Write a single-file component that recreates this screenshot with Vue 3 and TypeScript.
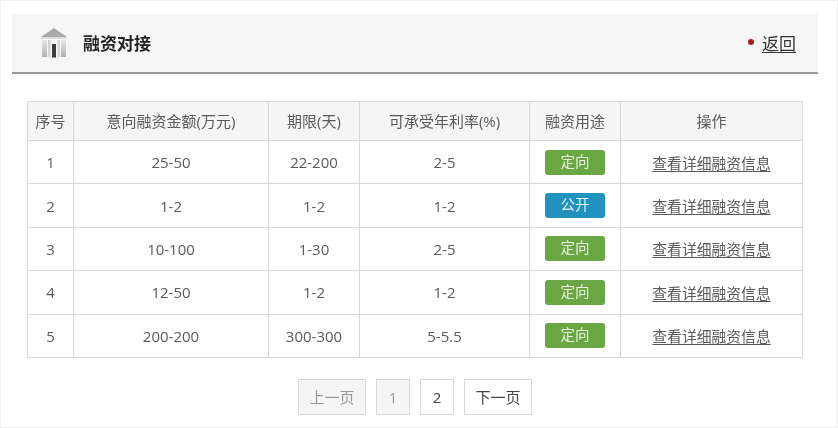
<script setup lang="ts">
interface Row {
  id: number
  amount: string
  days: string
  rate: string
  open: boolean
}
const rows: Row[] = [
  { id: 1, amount: '25-50', days: '22-200', rate: '2-5', open: false },
  { id: 2, amount: '1-2', days: '1-2', rate: '1-2', open: true },
  { id: 3, amount: '10-100', days: '1-30', rate: '2-5', open: false },
  { id: 4, amount: '12-50', days: '1-2', rate: '1-2', open: false },
  { id: 5, amount: '200-200', days: '300-300', rate: '5-5.5', open: false },
]
</script>

<template>
  <div class="page">
    <header class="head">
      <div class="title">
        <svg class="bank" width="28" height="30" viewBox="0 0 28 30">
          <defs>
            <linearGradient id="col" x1="0" y1="0" x2="0" y2="1">
              <stop offset="0" stop-color="#e8e8e8" />
              <stop offset="1" stop-color="#b0b0b0" />
            </linearGradient>
          </defs>
          <path d="M14 0 L27 9 L1 9 Z" fill="#a9a9a9" />
          <rect x="1" y="9" width="26" height="2" fill="#dcdcdc" />
          <rect x="2" y="12" width="5" height="17" fill="url(#col)" />
          <rect x="21" y="12" width="5" height="17" fill="url(#col)" />
          <rect x="8" y="12" width="2.5" height="17" fill="#d4d4d4" />
          <rect x="17.500" y="12" width="2.500" height="17" fill="#d4d4d4" />
          <rect x="12" y="16" width="4" height="13.500" fill="#3c3c3c" />
        </svg>
        <h1>融资对接</h1>
      </div>
      <div class="back"><i class="dot"></i><a>返回</a></div>
    </header>

    <table class="grid">
      <colgroup>
        <col class="c1" /><col class="c2" /><col class="c3" /><col class="c4" /><col class="c5" /><col class="c6" />
      </colgroup>
      <thead>
        <tr>
          <th>序号</th>
          <th>意向融资金额(万元)</th>
          <th>期限(天)</th>
          <th>可承受年利率(%)</th>
          <th>融资用途</th>
          <th>操作</th>
        </tr>
      </thead>
      <tbody>
        <tr v-for="r in rows" :key="r.id">
          <td>{{ r.id }}</td>
          <td>{{ r.amount }}</td>
          <td>{{ r.days }}</td>
          <td>{{ r.rate }}</td>
          <td><span class="tag" :class="{ open: r.open }">{{ r.open ? '公开' : '定向' }}</span></td>
          <td><a class="link">查看详细融资信息</a></td>
        </tr>
      </tbody>
    </table>

    <nav class="pager">
      <span class="pg off wide">上一页</span>
      <span class="pg off">1</span>
      <span class="pg">2</span>
      <span class="pg wide">下一页</span>
    </nav>
  </div>
</template>

<style scoped>
.page {
  box-sizing: border-box;
  width: 838px;
  height: 428px;
  padding: 14px 19px 0 11px;
  border: 1px solid #f0f0f0;
  background: #fff;
  font-family: "Open Sans", "Noto Sans CJK SC", sans-serif;
  font-size: 15px;
  color: #5a5a5a;
  filter: blur(0.6px);
}
.head {
  box-sizing: border-box;
  height: 60px;
  margin-top: -1px;
  padding: 0 22px 2px 28px;
  display: flex;
  align-items: center;
  justify-content: space-between;
  background: #f6f6f6;
  border-bottom: 2px solid #999999;
}
.title {
  display: flex;
  align-items: center;
  gap: 15px;
}
.bank { display: block; margin-top: 1px; }
h1 {
  margin: 0;
  font-size: 17px;
  font-weight: 600;
  color: #222;
}
.back {
  display: flex;
  align-items: center;
  gap: 8px;
  font-size: 17px;
  color: #333;
}
.dot {
  width: 6px;
  height: 6px;
  border-radius: 50%;
  background: #a81c24;
}
.back a { text-decoration: underline; text-underline-offset: 2px; }
.grid {
  box-sizing: border-box;
  width: 775px;
  margin: 27px 0 0 15px;
  border-collapse: collapse;
  table-layout: fixed;
}
.c1 { width: 46px; }
.c2 { width: 195px; }
.c3 { width: 91px; }
.c4 { width: 170px; }
.c5 { width: 91px; }
.c6 { width: 182px; }
th, td {
  padding: 0;
  border: 1px solid #d8d8d8;
  text-align: center;
  font-weight: 400;
  vertical-align: middle;
}
th {
  height: 36px;
  padding-bottom: 2px;
  background: #f5f5f5;
  font-size: 15px;
  color: #5a5a5a;
}
td { height: 42.400px; }
.tag {
  display: inline-block;
  width: 60px;
  height: 25px;
  line-height: 24px;
  border-radius: 3px;
  background: #6ba644;
  color: #e8f2df;
  font-size: 14.500px;
  vertical-align: middle;
}
.tag.open { background: #2192bd; color: #e6f4fa; }
.link { color: #5a5a5a; text-decoration: underline; text-underline-offset: 2px; font-size: 14.800px; }
.pager {
  margin-top: 21px;
  margin-left: 286px;
  display: flex;
  gap: 10px;
}
.pg {
  box-sizing: border-box;
  width: 34px;
  height: 36px;
  line-height: 34px;
  text-align: center;
  border: 1px solid #d8d8d8;
  background: #fff;
  color: #444;
}
.pg.wide { width: 68px; }
.pg.off { background: #f5f5f5; color: #999; }
</style>
<style>
html, body { margin: 0; background: #fff; overflow: hidden; }
</style>
